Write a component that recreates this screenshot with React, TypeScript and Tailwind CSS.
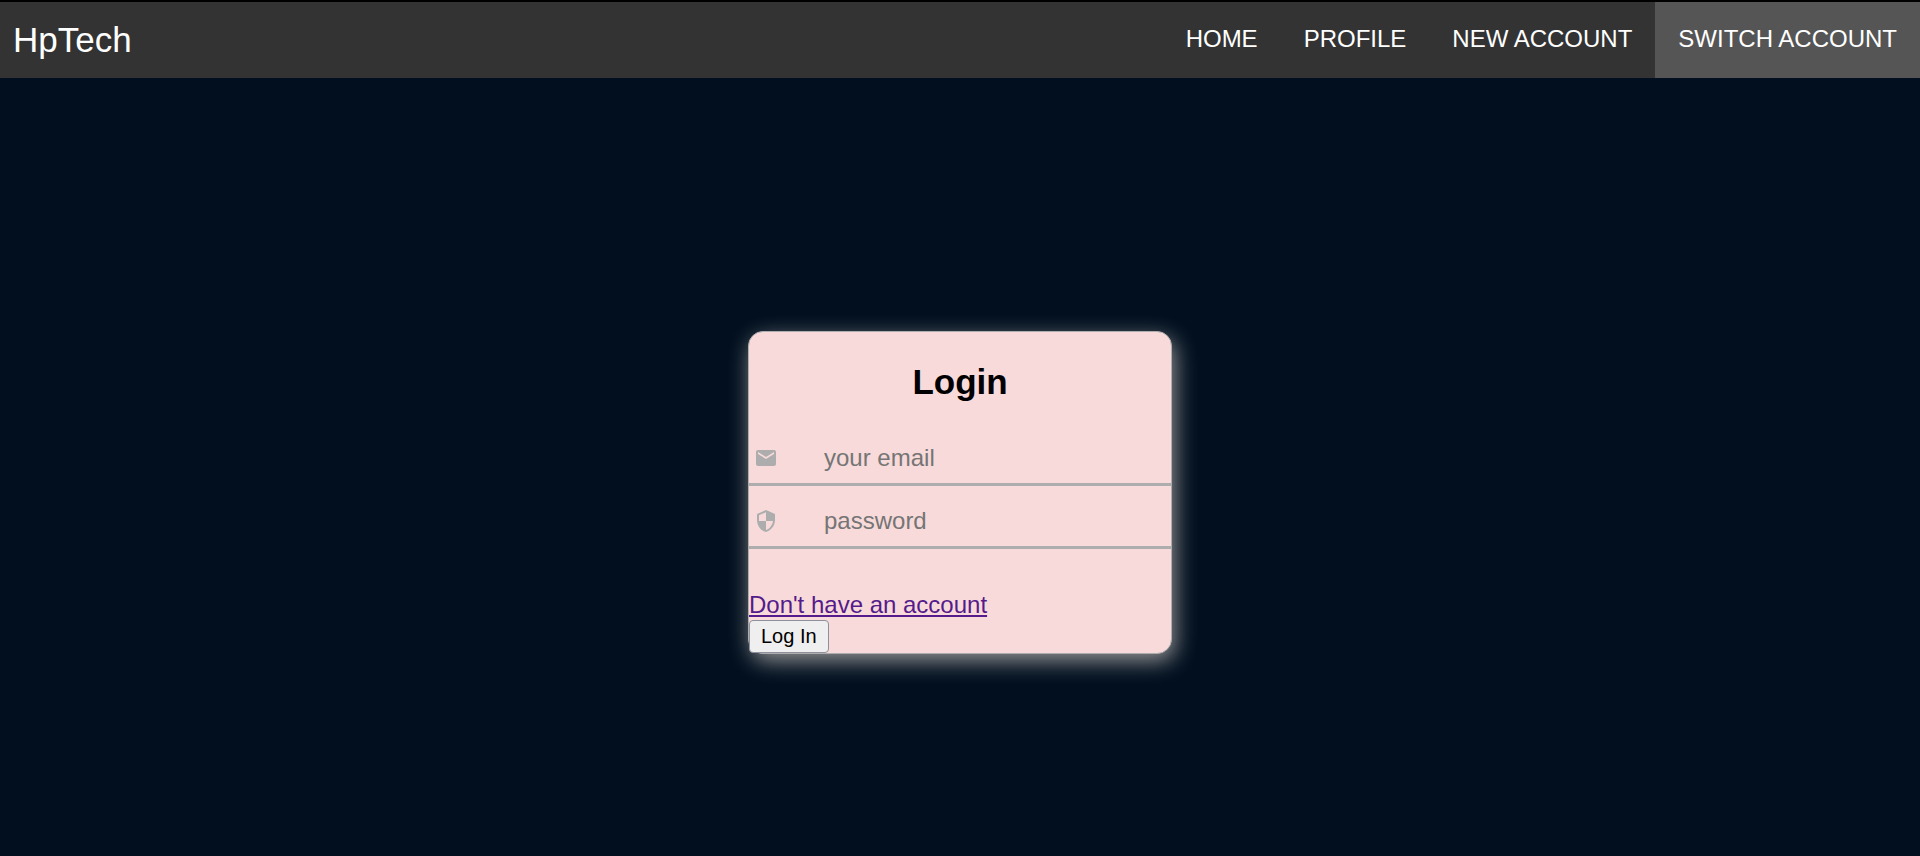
import { MdEmail, MdSecurity } from "react-icons/md";

const links = ["HOME", "PROFILE", "NEW ACCOUNT", "SWITCH ACCOUNT"];

function Navbar() {
  return (
    <header className="flex h-[78px] items-stretch justify-between border-t-2 border-black bg-[#333333] text-white">
      <a href="#" className="pl-[13px] pt-[17px] text-[35px] leading-[42px]">
        HpTech
      </a>
      <nav className="flex text-[24px] leading-[28px]">
        {links.map((label) => (
          <a
            key={label}
            href="#"
            aria-current={label === "SWITCH ACCOUNT" ? "page" : undefined}
            className="px-[23px] pt-[23px] aria-[current=page]:bg-[#555555]"
          >
            {label}
          </a>
        ))}
      </nav>
    </header>
  );
}

interface FieldProps {
  id: string;
  type: string;
  label: string;
  icon: React.ReactNode;
}

function Field({ id, type, label, icon }: FieldProps) {
  return (
    <div className="flex h-[63px] items-center border-b-[3px] border-[#adadad] pl-[5px] pt-[10px]">
      <label htmlFor={id} aria-label={label} className="w-[70px] text-[24px] text-[#adadad]">
        {icon}
      </label>
      <input
        id={id}
        type={type}
        placeholder={label}
        className="min-w-0 flex-1 bg-transparent text-[24px] leading-[28px] text-black outline-none placeholder:text-[#757575]"
      />
    </div>
  );
}

export default function App() {
  return (
    <div className="flex min-h-screen flex-col bg-[#010f1f] font-['Liberation_Sans',Arial,sans-serif]">
      <Navbar />
      <main className="flex flex-1 items-center justify-center pt-[50px]">
        <form className="w-full max-w-[424px] rounded-[15px] border border-[#adadad] bg-[#f8dada] shadow-[3px_7px_22px_#949494]">
          <h1 className="pb-5 pt-[29px] text-center text-[35px] font-bold leading-[42px] text-black">Login</h1>
          <Field id="email" type="email" label="your email" icon={<MdEmail />} />
          <Field id="password" type="password" label="password" icon={<MdSecurity />} />
          <a
            href="#"
            className="mt-[41px] block w-fit text-[24px] leading-[30px] text-[#551a8b] underline"
          >
            Don't have an account
          </a>
          <button
            type="button"
            className="block h-[33px] rounded-[4px] border border-[#8f8f9d] bg-[#efefef] px-[11px] text-[20px] leading-[24px] text-black"
          >
            Log In
          </button>
        </form>
      </main>
    </div>
  );
}
